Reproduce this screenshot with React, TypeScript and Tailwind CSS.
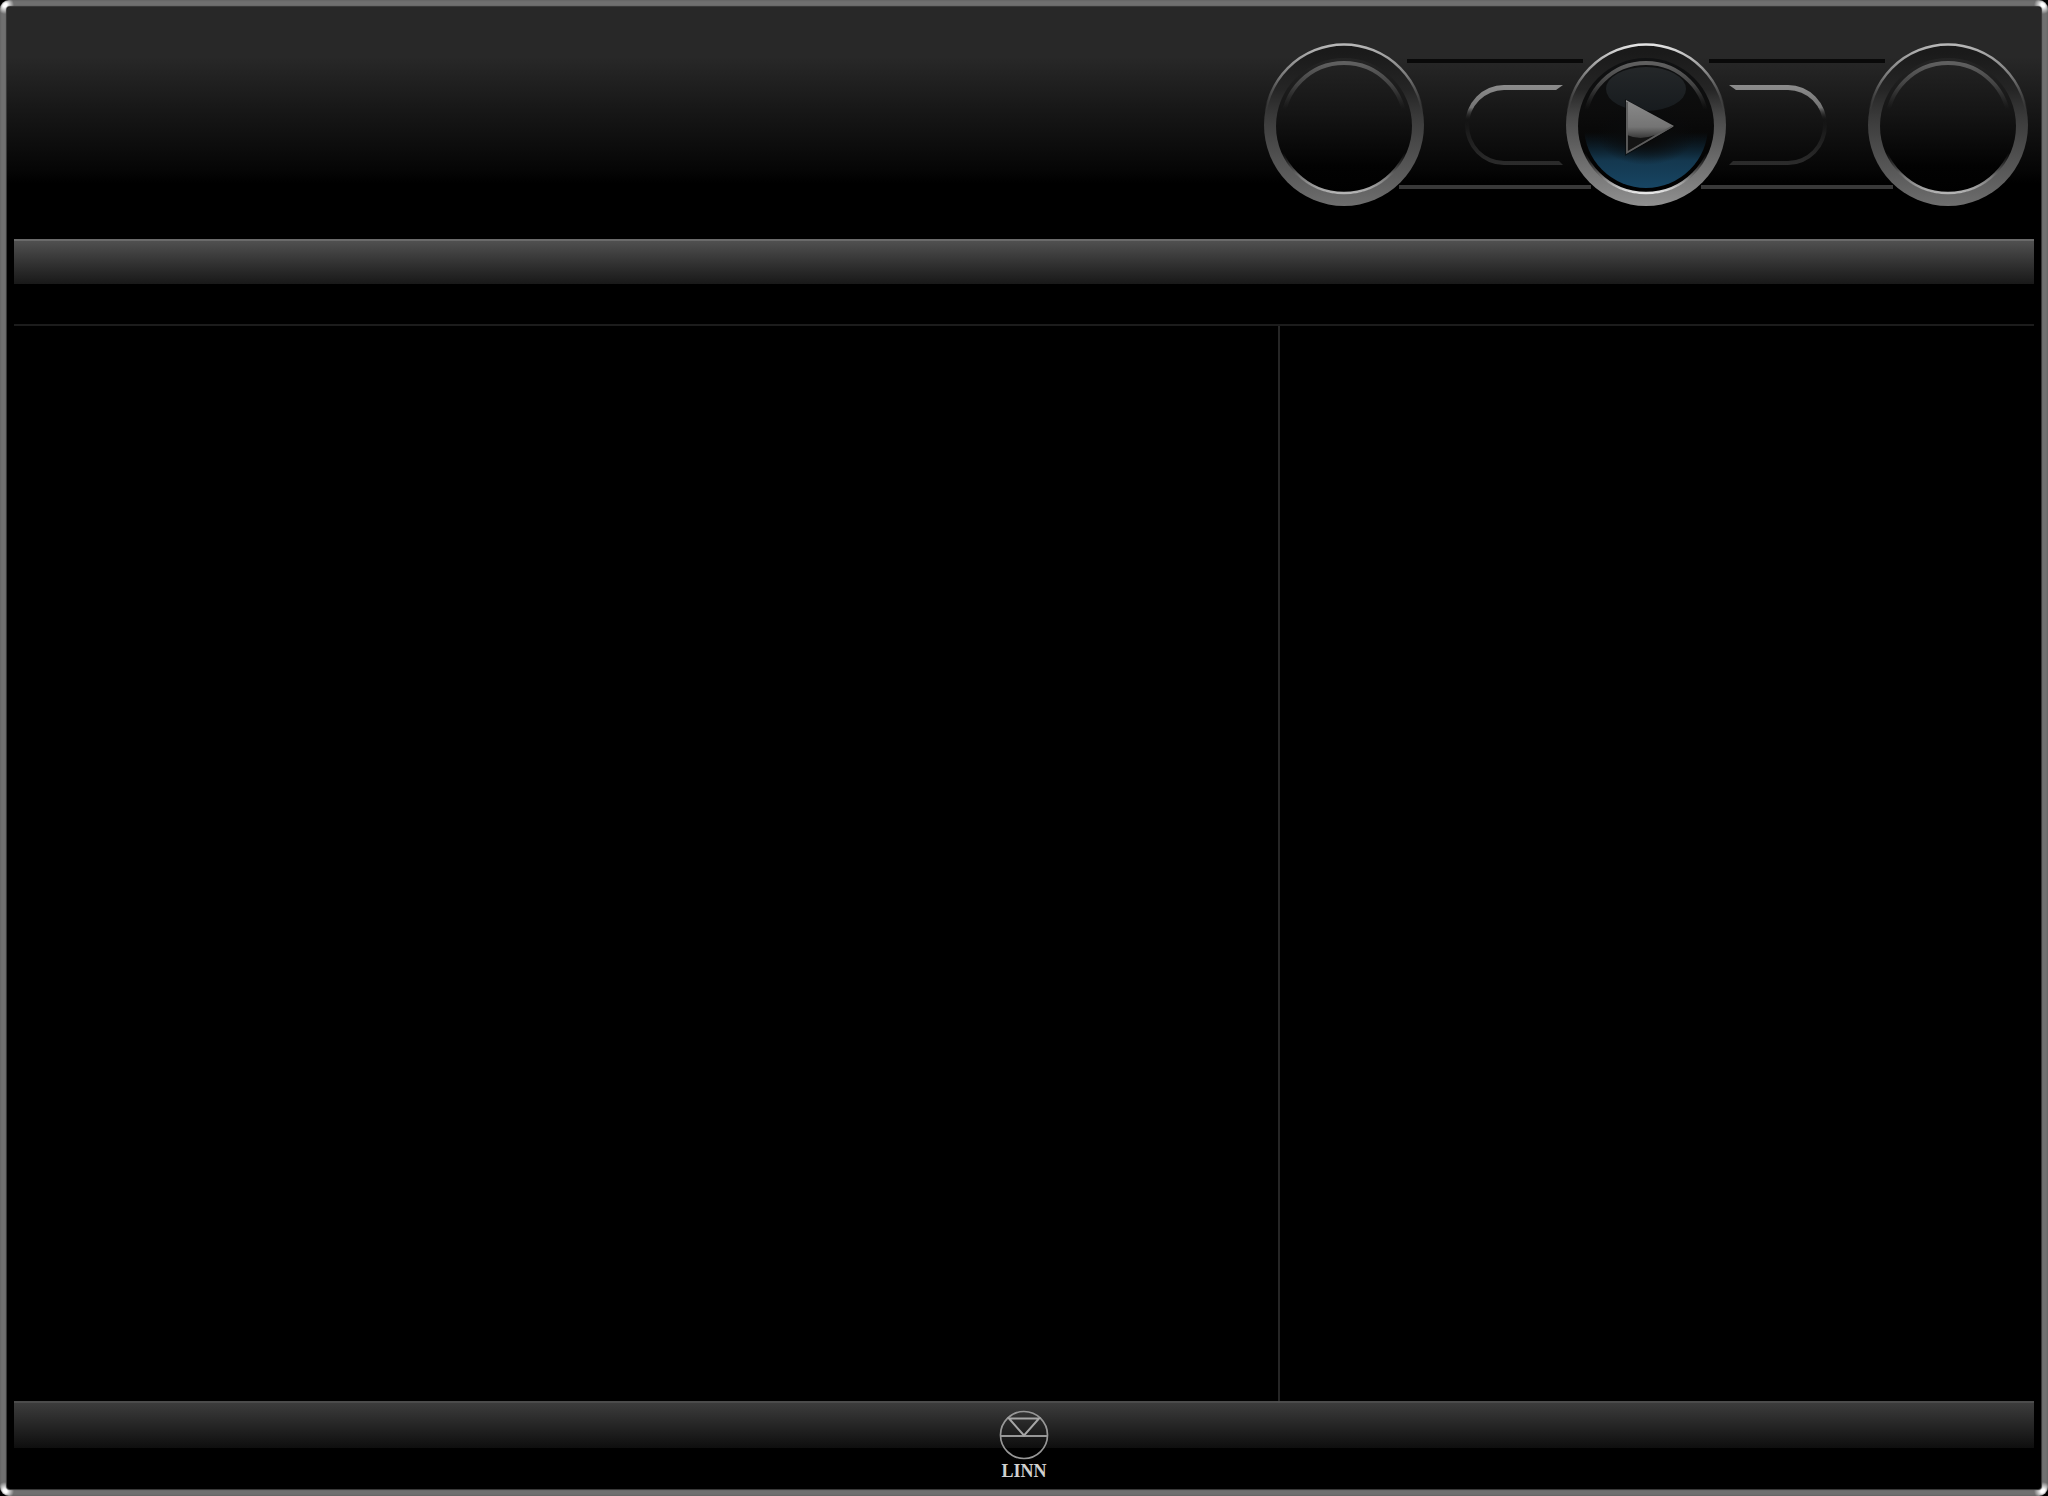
import React from "react";

type KnobProps = { label: string; id: string; lit?: boolean };

function Knob({ label, id, lit = false }: KnobProps) {
  return (
    <button type="button" aria-label={label} className="relative z-10 h-[164px] w-[162px] shrink-0 rounded-full">
      <svg viewBox="0 0 162 164" className="block h-full w-full" aria-hidden="true">
        <defs>
          <linearGradient id={`${id}-ring`} x1="0" y1="0" x2="0" y2="1">
            <stop offset="0.05" stopColor="#1a1a1a" />
            <stop offset="0.28" stopColor="#252525" />
            <stop offset="0.45" stopColor={lit ? "#484848" : "#3a3a3a"} />
            <stop offset="0.75" stopColor={lit ? "#707070" : "#555555"} />
            <stop offset="1" stopColor={lit ? "#909090" : "#6e6e6e"} />
          </linearGradient>
          <linearGradient id={`${id}-rim`} x1="0" y1="0" x2="0" y2="1">
            <stop offset="0" stopColor={lit ? "#e4e4e4" : "#b8b8b8"} />
            <stop offset="0.2" stopColor="#787878" />
            <stop offset="0.42" stopColor="#505050" stopOpacity="0" />
          </linearGradient>
          <linearGradient id={`${id}-face`} x1="0" y1="0" x2="0" y2="1">
            <stop offset="0" stopColor={lit ? "#101112" : "#242424"} />
            <stop offset="0.4" stopColor={lit ? "#0c0c0c" : "#151515"} />
            <stop offset="0.8" stopColor="#020202" />
            <stop offset="1" stopColor="#000000" />
          </linearGradient>
          <linearGradient id={`${id}-arc`} x1="0" y1="0" x2="0" y2="1">
            <stop offset="0" stopColor="#606060" />
            <stop offset="0.18" stopColor="#424242" />
            <stop offset="0.38" stopColor="#303030" stopOpacity="0" />
          </linearGradient>
          <linearGradient id={`${id}-lip`} x1="0" y1="0" x2="0" y2="1">
            <stop offset="0.7" stopColor="#555555" stopOpacity="0" />
            <stop offset="0.88" stopColor="#777777" />
            <stop offset="1" stopColor={lit ? "#e8e8e8" : "#b4b4b4"} />
          </linearGradient>
          <linearGradient id={`${id}-glow`} x1="0" y1="0" x2="0" y2="1">
            <stop offset="0.55" stopColor="#102c3e" stopOpacity="0" />
            <stop offset="0.78" stopColor="#14384f" />
            <stop offset="1" stopColor="#174563" />
          </linearGradient>
          <radialGradient id={`${id}-shade`}>
            <stop offset="0.3" stopColor="#0a0b0c" />
            <stop offset="1" stopColor="#0a0b0c" stopOpacity="0" />
          </radialGradient>
          <linearGradient id={`${id}-gloss`} x1="0" y1="0" x2="0" y2="1">
            <stop offset="0" stopColor="#242729" />
            <stop offset="1" stopColor="#171b1e" />
          </linearGradient>
          <linearGradient id={`${id}-play`} x1="0" y1="0" x2="0" y2="1">
            <stop offset="0" stopColor="#8a8a8a" />
            <stop offset="0.5" stopColor="#747474" />
            <stop offset="0.72" stopColor="#343434" />
          </linearGradient>
        </defs>
        <ellipse cx="81" cy="82" rx="80" ry="81" fill={`url(#${id}-ring)`} />
        <ellipse cx="81" cy="82" rx="79.500" ry="80.500" fill="none" stroke={`url(#${id}-rim)`} strokeWidth="2.500" />
        <circle cx="81" cy="83" r="68" fill={`url(#${id}-face)`} />
        <circle cx="81" cy="83" r="67" fill="none" stroke={`url(#${id}-lip)`} strokeWidth="2.500" />
        <circle cx="81" cy="81" r="61" fill="none" stroke={`url(#${id}-arc)`} strokeWidth="4" />
        {lit && (
          <g>
            <circle cx="81" cy="83" r="62" fill={`url(#${id}-glow)`} />
            <ellipse cx="81" cy="90" rx="50" ry="32" fill={`url(#${id}-shade)`} />
            <ellipse cx="81" cy="46" rx="40" ry="22" fill={`url(#${id}-gloss)`} />
            <path d="M60 56 L111 83 L60 113 Z" fill="#050505" opacity="0.5" />
            <path d="M61 57 L109 83 L61 111 Z" fill={`url(#${id}-play)`} />
            <path d="M62 92 Q75 98 90 92 L62 109 Z" fill="#141414" />
            <path d="M62 59 V109.500 L107 83.500" fill="none" stroke="#5c5c5c" strokeWidth="1.800" />
          </g>
        )}
      </svg>
    </button>
  );
}

function Link({ id, flip = false }: { id: string; flip?: boolean }) {
  return (
    <svg viewBox="0 0 140 164" className="h-[164px] w-[140px] shrink-0 overflow-visible" aria-hidden="true">
      <defs>
        <linearGradient id={id} gradientUnits="userSpaceOnUse" x1="0" y1="42" x2="0" y2="122">
          <stop offset="0" stopColor="#8c8c8c" />
          <stop offset="0.28" stopColor="#747474" />
          <stop offset="0.44" stopColor="#1a1a1a" stopOpacity="0" />
          <stop offset="0.6" stopColor="#1c1c1c" />
          <stop offset="1" stopColor="#2c2c2c" />
        </linearGradient>
      </defs>
      <path d="M-18 18 H158" stroke="#090909" strokeWidth="4" />
      <path d="M-26 144 H166" stroke="#383838" strokeWidth="4" />
      <g transform={flip ? "translate(140 0) scale(-1 1)" : undefined}>
        <path
          d="M138 42 H79 A39 40 0 0 0 40 82 A39 40 0 0 0 79 122 H138 L134 118 H79 A35 36 0 0 1 44 82 A35 35 0 0 1 79 47 H131 Z"
          fill={`url(#${id})`}
        />
      </g>
    </svg>
  );
}

function LinnLogo() {
  return (
    <div className="flex flex-col items-center text-[#d0d0d0]">
      <svg viewBox="0 0 50 50" className="size-[50px]" fill="none" aria-hidden="true">
        <circle cx="25" cy="25" r="23.500" stroke="#979797" strokeWidth="1.700" />
        <path d="M2 26 H48" stroke="#979797" strokeWidth="2" />
        <path d="M10 8.500 H40 L25 25.500 Z" stroke="#a6a6a6" strokeWidth="2" />
      </svg>
      <span className="font-['Liberation_Serif',serif] text-[18px] leading-[22px] font-bold">LINN</span>
    </div>
  );
}

export default function App() {
  return (
    <div className="h-screen bg-black">
      <div className="h-full rounded-[9px] bg-[radial-gradient(circle_at_5px_5px,#fff_2px,transparent_9px),radial-gradient(circle_at_calc(100%-5px)_5px,#fff_2px,transparent_9px),radial-gradient(circle_at_5px_calc(100%-5px),#fff_2px,transparent_9px),radial-gradient(circle_at_calc(100%-5px)_calc(100%-5px),#fff_2px,transparent_9px)] bg-[#707070] p-[7px] shadow-[inset_0_0_2px_#555]">
        <div className="flex h-full flex-col rounded-[3px] bg-black shadow-[0_0_1px_1px_#333]">
          <header className="flex h-[232px] shrink-0 justify-end rounded-t-[3px] bg-[linear-gradient(#282828_0px,#282828_50px,#181818_100px,#050505_165px,#000_176px)] pt-9 pr-3">
            <div className="flex h-[164px]">
              <Knob id="left" label="Left control" />
              <Link id="link-left" />
              <Knob id="play" label="Play" lit />
              <Link id="link-right" flip />
              <Knob id="right" label="Right control" />
            </div>
          </header>
          <nav aria-label="Toolbar" className="mx-[7px] h-[45px] shrink-0 border-t-2 border-[#6a6a6a] bg-linear-to-b from-[#505050] to-[#191919]" />
          <main className="mx-[7px] mt-10 flex flex-1 border-t-2 border-[#1c1c1c]">
            <section aria-label="Browser" className="flex-[1264]" />
            <aside aria-label="Playlist" className="flex-[754] border-l-2 border-[#262626]" />
          </main>
          <footer className="mx-[7px] flex h-[88px] shrink-0 justify-center bg-[linear-gradient(#4c4c4c_0px,#4c4c4c_2px,#3c3c3c_2px,#0e0e0e_47px,#000_47px)] pt-[9px]">
            <LinnLogo />
          </footer>
        </div>
      </div>
    </div>
  );
}
